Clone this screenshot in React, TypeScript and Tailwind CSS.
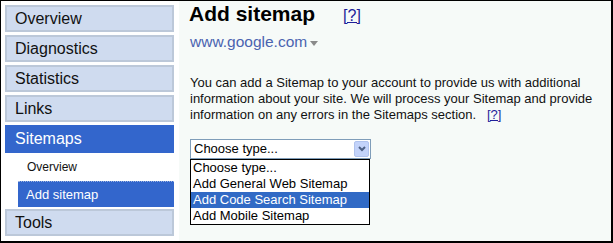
const navItems = ['Overview', 'Diagnostics', 'Statistics', 'Links'];
const options = ['Choose type...', 'Add General Web Sitemap', 'Add Code Search Sitemap', 'Add Mobile Sitemap'];

function NavItem({ label }: { label: string }) {
  return (
    <div className="h-[27px] flex items-center pl-[8px] bg-[#cfdbef] border-2 border-[#bcc8d9] text-[16px] text-[#111]">
      {label}
    </div>
  );
}

export default function App() {
  return (
    <div
      className="w-[613px] h-[243px] flex border-black border-t border-l border-r-2 border-b-2 overflow-hidden"
      style={{ fontFamily: '"Liberation Sans", Arial, sans-serif' }}
    >
      {/* sidebar */}
      <div className="w-[178px] shrink-0 bg-white pt-[4px] pl-[4px] pr-[5px] flex flex-col">
        <div className="flex flex-col gap-[3px]">
          {navItems.map((n) => (
            <NavItem key={n} label={n} />
          ))}
          <div className="h-[28px] flex items-center pl-[10px] bg-[#3366cc] text-white text-[16px]">Sitemaps</div>
        </div>
        <div className="h-[28px] flex items-center pl-[22px] text-[12px] text-[#111]">Overview</div>
        <div className="ml-[13px] h-[26px] flex items-center pl-[8px] bg-[#3366cc] text-white text-[13px] border-t border-dotted border-[#9db3e0]">
          Add sitemap
        </div>
        <div className="mt-[2px]">
          <NavItem label="Tools" />
        </div>
      </div>

      {/* main */}
      <div className="flex-1 bg-[#f6faf8] pl-[10px] pt-[1px]">
        <div className="flex items-baseline h-[24px] leading-[24px]">
          <span className="text-[21px] font-bold text-black">Add sitemap</span>
          <a className="ml-[28px] text-[16px] text-[#1f1f9a] underline">[?]</a>
        </div>
        <div className="mt-[6px] h-[20px] leading-[20px] flex items-center text-[15.5px] text-[#4a63b0]">
          <span className="ml-[1px]">www.google.com</span>
          <svg width="8" height="5" viewBox="0 0 8 5" className="ml-[3px] mt-[2px]">
            <path d="M0 0 L8 0 L4 5 Z" fill="#8a8a8a" />
          </svg>
        </div>
        <p className="mt-[23px] ml-[1px] text-[13px] leading-[16px] text-[#111] w-[410px]">
          You can add a Sitemap to your account to provide us with additional information about your site. We will
          process your Sitemap and provide information on any errors in the Sitemaps section.&nbsp;&nbsp;&nbsp;
          <a className="text-[#1f1f9a] underline">[?]</a>
        </p>

        {/* select with open list */}
        <div className="mt-[16px] ml-[1px] w-[181px]">
          <div className="h-[20px] flex items-center border border-[#7f9db9] bg-white">
            <span className="flex-1 pl-[3px] text-[13px] text-black">Choose type...</span>
            <div className="w-[15px] h-[16px] mr-[1px] rounded-[2px] bg-[#c3d3fa] border border-[#b0c3ee] flex items-center justify-center">
              <svg width="8" height="6" viewBox="0 0 8 6">
                <path d="M1 1 L4 4 L7 1" stroke="#4d6185" strokeWidth="2" fill="none" />
              </svg>
            </div>
          </div>
          <div className="border border-black bg-white w-[180px]">
            {options.map((o, i) => (
              <div
                key={o}
                className={`h-[16px] leading-[16px] pl-[2px] text-[13px] ${
                  i === 2 ? 'bg-[#316ac5] text-white' : 'text-black'
                }`}
              >
                {o}
              </div>
            ))}
          </div>
        </div>
      </div>
    </div>
  );
}
